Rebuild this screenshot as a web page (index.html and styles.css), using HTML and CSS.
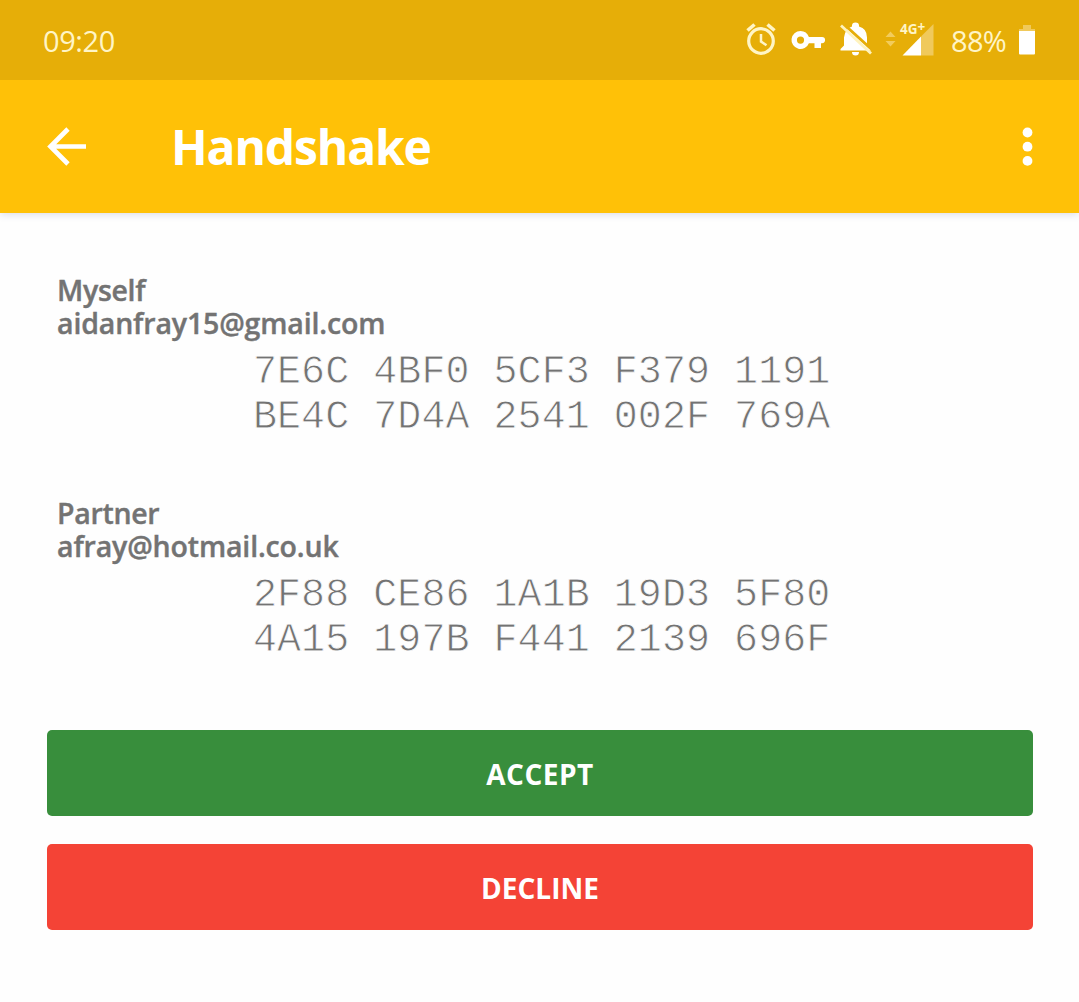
FILE: index.html
```html
<!DOCTYPE html>
<html lang="en">
<head>
<meta charset="utf-8">
<title>Handshake</title>
<link rel="stylesheet" href="styles.css">
</head>
<body>
<header class="status-bar">
  <span class="clock">09:20</span>
  <svg class="status-icons" width="196" height="44" viewBox="0 0 196 44" aria-hidden="true">
    <g fill="none" stroke="#fff5c6">
      <circle cx="21" cy="23" r="12.3" stroke-width="3.200"/>
      <path d="M21 16v7.500l5.500 3.700" stroke-width="2.500"/>
      <path d="M7.500 12.500l7-6M34.500 12.500l-7-6" stroke-width="3.600"/>
    </g>
    <path fill="#fff" fill-rule="evenodd" d="M60.500 13a9 9 0 0 1 8.400 6H82a3 3 0 0 1 0 6.200h-1V30h-6.500v-4.800h-5.600a9 9 0 1 1-8.400-12.200zm0 5.500a3.600 3.600 0 1 0 0 7.200a3.600 3.600 0 0 0 0-7.200z"/>
    <path fill="#fff" d="M104 19.500Q105 10.500 112 8.500V7.500a3.500 3 0 0 1 7 0v1q8 2 8 11V27l4 4v1.500H100.500V31l3.500-3.500z"/>
    <path fill="#fff" d="M112 34h7a3.500 3.500 0 0 1-7 0z"/>
    <path d="M103 5.500l31 28" stroke="#e6ae08" stroke-width="3"/>
    <path d="M101 7.500l30 28" stroke="#fff3bd" stroke-width="2.800"/>
    <path fill="#f2cc5c" d="M145.500 19l5-5.500 5 5.500zM145.500 23h10l-5 5.500z"/>
    <path fill="#f0c95b" d="M193.500 6v31.500H181V18.500z"/>
    <path fill="#fff" d="M181 18.500v19h-18.500z"/>
    <text class="network" x="160" y="15.500">4G<tspan dy="-2">+</tspan></text>
  </svg>
  <span class="charge">88%</span>
  <svg class="battery" width="16" height="30" viewBox="0 0 16 30" aria-hidden="true">
    <path fill="#f0c95b" d="M4 0h8v4h4v3H0V4h4z"/>
    <path fill="#fff" d="M0 6h16v22.500a1 1 0 0 1-1 1H1a1 1 0 0 1-1-1z"/>
  </svg>
</header>
<nav class="app-bar">
  <svg width="40" height="40" viewBox="0 0 40 40" fill="none" stroke="#fff" stroke-width="4.700" aria-label="Back">
    <path d="M39 19.500H5M21 2L3.500 19.500L21 37"/>
  </svg>
  <h1 class="title">Handshake</h1>
  <svg width="12" height="40" viewBox="0 0 12 40" fill="#fff" aria-label="More options">
    <circle cx="6.500" cy="5.500" r="4.900"/><circle cx="6.500" cy="19.700" r="4.900"/><circle cx="6.500" cy="33.900" r="4.900"/>
  </svg>
</nav>
<main class="content">
  <section class="identity">
    <p class="label name">Myself</p>
    <p class="label mail">aidanfray15@gmail.com</p>
    <p class="fingerprint">7E6C 4BF0 5CF3 F379 1191<br>BE4C 7D4A 2541 002F 769A</p>
  </section>
  <section class="identity">
    <p class="label name">Partner</p>
    <p class="label mail">afray@hotmail.co.uk</p>
    <p class="fingerprint">2F88 CE86 1A1B 19D3 5F80<br>4A15 197B F441 2139 696F</p>
  </section>
  <div class="actions">
    <button class="button accept">ACCEPT</button>
    <button class="button decline">DECLINE</button>
  </div>
</main>
</body>
</html>
```
FILE: styles.css
```css
* { box-sizing: border-box; }
body {
  margin: 0;
  min-height: 1002px;
  background: #fefefe;
  color: #737373;
  font-family: "Open Sans", "Noto Sans", sans-serif;
}
p, h1 { margin: 0; }
svg { display: block; flex: none; }
.status-bar {
  position: relative;
  z-index: 1;
  display: flex;
  align-items: center;
  height: 80px;
  padding: 0 44px 0 43px;
  background: #e6ae08;
  color: #fff5c6;
  font-size: 29px;
}
.clock { letter-spacing: -0.4px; }
.status-icons { margin-left: auto; overflow: visible; }
.network { fill: #fff5c6; font-size: 13.5px; font-weight: 700; }
.charge { margin-left: 15px; width: 56px; white-space: nowrap; letter-spacing: -0.7px; }
.battery { margin-left: 12px; }
.app-bar {
  display: flex;
  align-items: center;
  height: 133px;
  padding: 0 46px 0 47px;
  background: #ffc107;
  color: #fff;
  box-shadow: 0 1px 8px rgba(60, 70, 120, 0.2);
}
.title {
  flex: 1;
  margin-left: 84px;
  font-size: 48px;
  font-weight: 700;
  line-height: 60px;
  letter-spacing: -1.15px;
}
.content { padding: 61px 46px 0 47px; }
.identity { height: 223px; padding-left: 10px; }
.label {
  font-size: 28.5px;
  font-weight: 600;
  line-height: 33px;
  -webkit-text-stroke: 0.4px currentColor;
}
.name { letter-spacing: -0.3px; }
.mail { letter-spacing: -0.15px; }
.fingerprint {
  padding: 10px 0 0 196px;
  font-family: "Liberation Mono", monospace;
  font-size: 40px;
  line-height: 45px;
  letter-spacing: 0.05px;
  -webkit-text-stroke: 0.8px #fefefe;
}
.actions { display: grid; gap: 28px; padding-top: 10px; }
.button {
  height: 86px;
  padding-top: 2px;
  border: 0;
  border-radius: 5px;
  color: #fff;
  font: 700 28px "Open Sans", "Noto Sans", sans-serif;
}
.accept { background: #388e3c; letter-spacing: 0.5px; }
.decline { background: #f44336; }
```
